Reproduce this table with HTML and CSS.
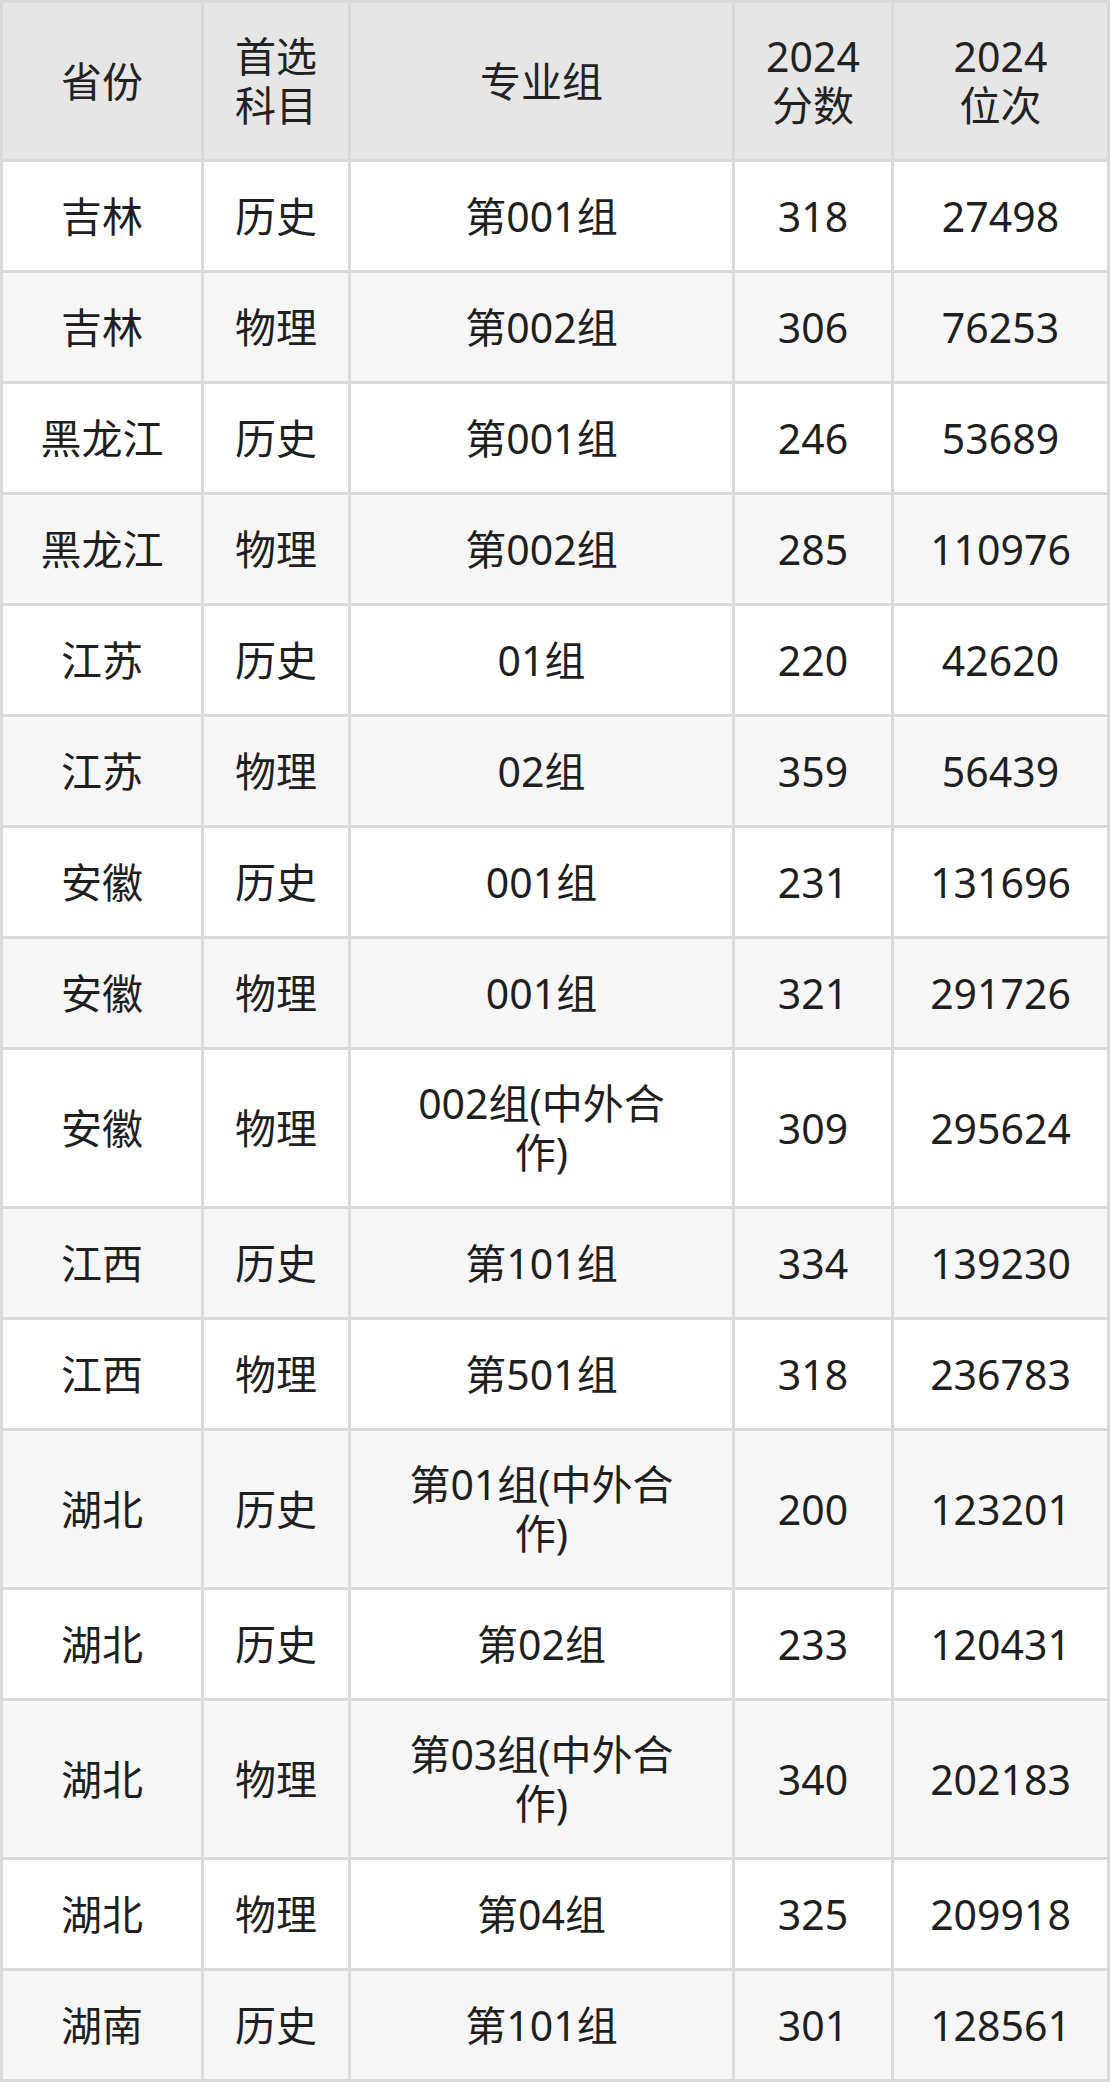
FILE: index.html
```html
<!DOCTYPE html>
<html lang="zh">
<head>
<meta charset="utf-8">
<link rel="stylesheet" href="styles.css">
</head>
<body>
<table class="score-table">
  <colgroup>
    <col class="c1"><col class="c2"><col class="c3"><col class="c4"><col class="c5">
  </colgroup>
  <thead>
    <tr><th>省份</th><th>首选<br>科目</th><th>专业组</th><th>2024<br>分数</th><th>2024<br>位次</th></tr>
  </thead>
  <tbody>
    <tr><td>吉林</td><td>历史</td><td class="grp">第001组</td><td>318</td><td>27498</td></tr>
    <tr><td>吉林</td><td>物理</td><td class="grp">第002组</td><td>306</td><td>76253</td></tr>
    <tr><td>黑龙江</td><td>历史</td><td class="grp">第001组</td><td>246</td><td>53689</td></tr>
    <tr><td>黑龙江</td><td>物理</td><td class="grp">第002组</td><td>285</td><td>110976</td></tr>
    <tr><td>江苏</td><td>历史</td><td class="grp">01组</td><td>220</td><td>42620</td></tr>
    <tr><td>江苏</td><td>物理</td><td class="grp">02组</td><td>359</td><td>56439</td></tr>
    <tr><td>安徽</td><td>历史</td><td class="grp">001组</td><td>231</td><td>131696</td></tr>
    <tr><td>安徽</td><td>物理</td><td class="grp">001组</td><td>321</td><td>291726</td></tr>
    <tr class="tall"><td>安徽</td><td>物理</td><td class="grp">002组(中外合作)</td><td>309</td><td>295624</td></tr>
    <tr><td>江西</td><td>历史</td><td class="grp">第101组</td><td>334</td><td>139230</td></tr>
    <tr><td>江西</td><td>物理</td><td class="grp">第501组</td><td>318</td><td>236783</td></tr>
    <tr class="tall"><td>湖北</td><td>历史</td><td class="grp">第01组(中外合作)</td><td>200</td><td>123201</td></tr>
    <tr><td>湖北</td><td>历史</td><td class="grp">第02组</td><td>233</td><td>120431</td></tr>
    <tr class="tall"><td>湖北</td><td>物理</td><td class="grp">第03组(中外合作)</td><td>340</td><td>202183</td></tr>
    <tr><td>湖北</td><td>物理</td><td class="grp">第04组</td><td>325</td><td>209918</td></tr>
    <tr><td>湖南</td><td>历史</td><td class="grp">第101组</td><td>301</td><td>128561</td></tr>
  </tbody>
</table>
</body>
</html>
```

FILE: styles.css
```css
html, body {
  margin: 0;
  padding: 0;
  background: #ffffff;
}

.score-table {
  border-collapse: separate;
  border-spacing: 3px;
  background: #dadada;
  table-layout: fixed;
  width: 1110px;
  font-family: "Noto Sans", "Open Sans", "Noto Sans CJK SC", sans-serif;
  font-size: 41px;
  line-height: 49px;
  color: #1f1f1f;
}

.c1 { width: 198px; }
.c2 { width: 144px; }
.c3 { width: 381px; }
.c4 { width: 156px; }
.c5 { width: 213px; }

.score-table th,
.score-table td {
  padding: 0;
  text-align: center;
  vertical-align: middle;
  font-weight: 400;
}

.score-table th {
  background: #e6e6e6;
  height: 156px;
  color: #222222;
}

.score-table td {
  background: #ffffff;
  height: 108px;
}

.score-table tbody tr:nth-child(even) td {
  background: #f6f6f6;
}

.score-table tr.tall td {
  height: 156px;
}

.score-table td.grp {
  padding: 0 48px;
}
```
